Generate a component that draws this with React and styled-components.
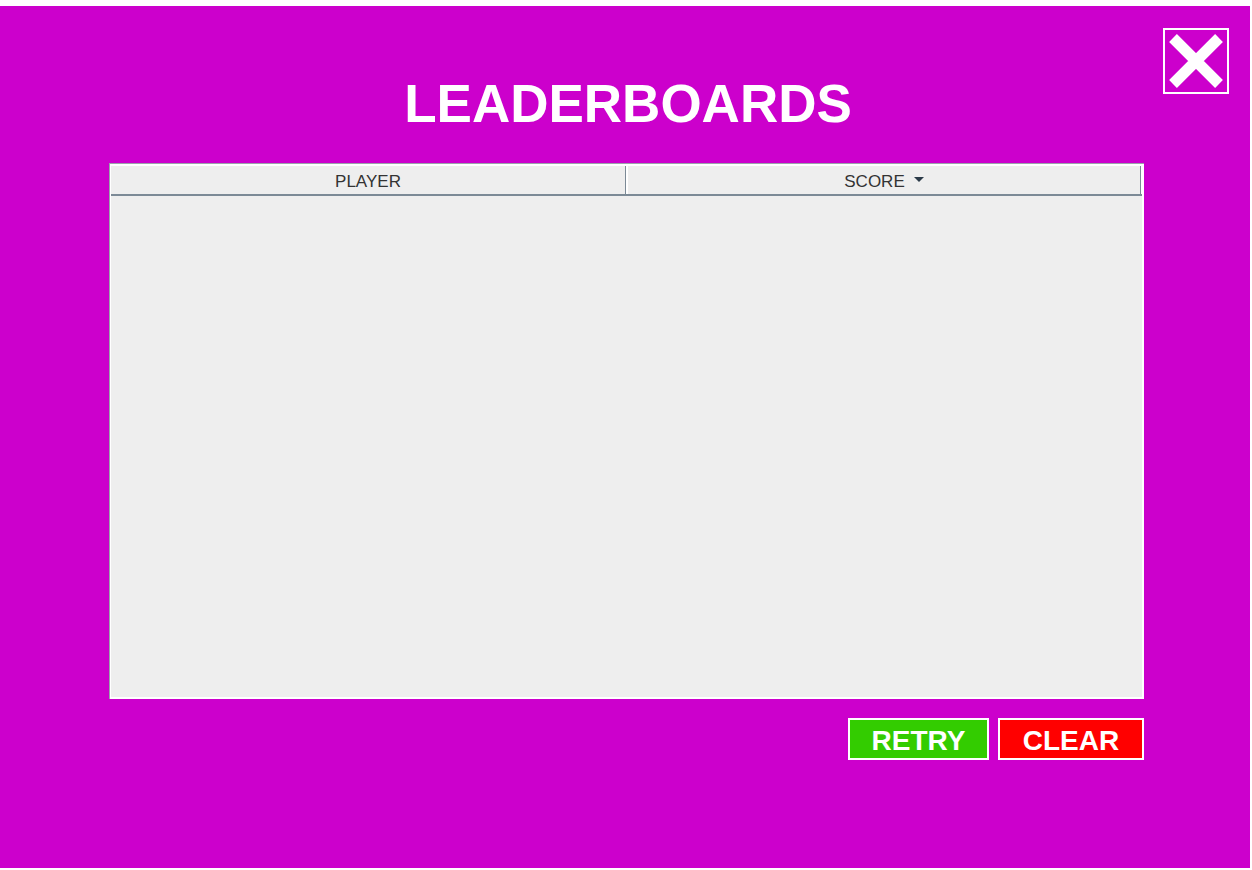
import React from 'react';
import styled, { createGlobalStyle } from 'styled-components';

const GlobalStyle = createGlobalStyle`
  html, body {
    margin: 0;
    padding: 0;
    background: #ffffff;
  }
  body {
    font-family: "Liberation Sans", Arial, sans-serif;
  }
`;

const Panel = styled.div`
  position: relative;
  box-sizing: border-box;
  margin-top: 6px;
  width: 1250px;
  height: 862px;
  background: #cc00cc;
  padding: 67px 107px 0 109px;
  display: flex;
  flex-direction: column;
`;

const CloseButton = styled.button`
  position: absolute;
  top: 22px;
  right: 21px;
  box-sizing: border-box;
  width: 66px;
  height: 66px;
  padding: 0;
  border: 2px solid #ffffff;
  background: transparent;
  display: flex;
  align-items: center;
  justify-content: center;
  cursor: pointer;
`;

const Title = styled.h1`
  margin: 0;
  text-align: center;
  color: #ffffff;
  font-size: 53px;
  line-height: 61px;
  font-weight: bold;
  padding-left: 4px;
`;

const Table = styled.div`
  margin-top: 29px;
  box-sizing: border-box;
  width: 1035px;
  height: 536px;
  background: #ffffff;
  border-top: 1px solid #9aa3ab;
  border-left: 1px solid #9aa3ab;
  padding: 2px 2px 2px 1px;
  display: flex;
  flex-direction: column;
`;

const HeaderRow = styled.div`
  display: grid;
  grid-template-columns: 515px 513px;
  column-gap: 2px;
  height: 28px;
  border-bottom: 2px solid #7c8a96;
  background: #ffffff;
`;

const HeaderCell = styled.div`
  box-sizing: border-box;
  background: #eeeeee;
  border-right: 1px solid #7c8a96;
  display: flex;
  align-items: center;
  justify-content: center;
  gap: 9px;
  color: #333333;
  font-size: 17px;
  padding-top: 3px;
`;

const SortArrow = styled.span`
  width: 0;
  height: 0;
  border-left: 5px solid transparent;
  border-right: 5px solid transparent;
  border-top: 5px solid #2b3a48;
  margin-top: -4px;
`;

const Body = styled.div`
  flex: 1;
  background: #eeeeee;
`;

const ButtonRow = styled.div`
  display: flex;
  justify-content: flex-end;
  gap: 9px;
  margin-top: 19px;
  width: 1035px;
`;

const ActionButton = styled.button`
  box-sizing: border-box;
  width: ${(p) => p.$w}px;
  height: 42px;
  border: 2px solid #ffffff;
  background: ${(p) => p.$bg};
  color: #ffffff;
  font-family: "Liberation Sans", Arial, sans-serif;
  font-weight: bold;
  font-size: 28px;
  line-height: 1;
  padding: 3px 0 0;
  cursor: pointer;
`;

export default function App() {
  return (
    <>
      <GlobalStyle />
      <Panel>
        <CloseButton aria-label="Close">
          <svg width="58" height="58" viewBox="0 0 58 58">
            <path d="M6 6 L52 52 M52 6 L6 52" stroke="#ffffff" strokeWidth="11" strokeLinecap="butt" />
          </svg>
        </CloseButton>
        <Title>LEADERBOARDS</Title>
        <Table>
          <HeaderRow>
            <HeaderCell>PLAYER</HeaderCell>
            <HeaderCell>
              SCORE
              <SortArrow />
            </HeaderCell>
          </HeaderRow>
          <Body />
        </Table>
        <ButtonRow>
          <ActionButton $bg="#33cc00" $w={141}>RETRY</ActionButton>
          <ActionButton $bg="#ff0000" $w={146}>CLEAR</ActionButton>
        </ButtonRow>
      </Panel>
    </>
  );
}
